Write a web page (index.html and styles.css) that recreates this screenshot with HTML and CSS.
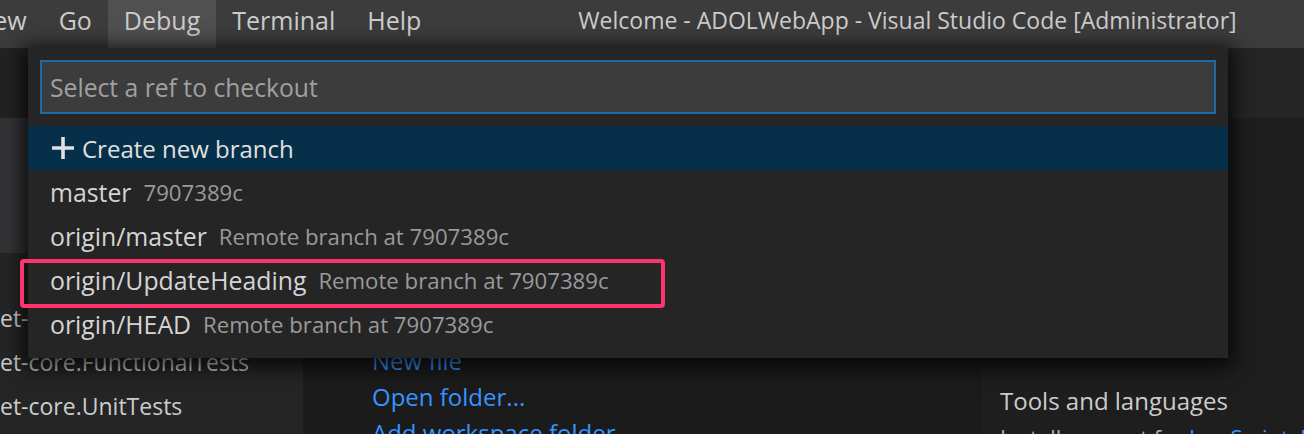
FILE: index.html
```html
<!DOCTYPE html>
<html lang="en">
<head>
<meta charset="utf-8">
<title>Welcome - ADOLWebApp - Visual Studio Code</title>
<link rel="stylesheet" href="styles.css">
</head>
<body>
<div class="app">
  <header class="titlebar">
    <nav class="menubar">
      <span class="menu menu-clipped">View</span>
      <span class="menu">Go</span>
      <span class="menu active">Debug</span>
      <span class="menu">Terminal</span>
      <span class="menu">Help</span>
    </nav>
    <div class="title">Welcome - ADOLWebApp - Visual Studio Code [Administrator]</div>
  </header>

  <div class="workbench">
    <aside class="sidebar">
      <div class="sidebar-head"></div>
      <div class="sidebar-section"></div>
      <ul class="tree">
        <li>et-core.Web</li>
        <li>et-core.FunctionalTests</li>
        <li>et-core.UnitTests</li>
      </ul>
    </aside>
    <main class="editor">
      <div class="tabs"></div>
      <div class="welcome">
        <div class="col-start">
          <a class="link">New file</a>
          <a class="link">Open folder...</a>
          <a class="link">Add workspace folder</a>
        </div>
        <div class="col-customize">
          <h3 class="heading">Tools and languages</h3>
          <p class="detail">Install support for <a class="link-inline">JavaScript, Python, PHP, Azure, Docker</a></p>
        </div>
      </div>
    </main>
  </div>

  <div class="quickpick">
    <div class="qp-input">Select a ref to checkout</div>
    <ul class="qp-list">
      <li class="qp-row selected">
        <svg class="plus" width="26" height="26" viewBox="0 0 26 26"><path d="M13 2v22M2 13h22" stroke="#e0e0e0" stroke-width="3.6" fill="none"/></svg>
        <span class="label">Create new branch</span>
      </li>
      <li class="qp-row"><span class="label">master</span><span class="desc">7907389c</span></li>
      <li class="qp-row"><span class="label">origin/master</span><span class="desc">Remote branch at 7907389c</span></li>
      <li class="qp-row"><span class="label">origin/UpdateHeading</span><span class="desc">Remote branch at 7907389c</span></li>
      <li class="qp-row"><span class="label">origin/HEAD</span><span class="desc">Remote branch at 7907389c</span></li>
    </ul>
  </div>

  <div class="annotation"></div>
</div>
</body>
</html>
```

FILE: styles.css
```css
* { box-sizing: border-box; }

html, body {
  margin: 0;
  padding: 0;
  background: #1e1e1e;
}

body {
  font-family: "Open Sans", "Noto Sans", sans-serif;
  color: #cccccc;
  width: 1304px;
  height: 434px;
  overflow: hidden;
}

.app {
  position: relative;
  width: 1304px;
  height: 434px;
  overflow: hidden;
  display: flex;
  flex-direction: column;
}

/* Title bar */
.titlebar {
  height: 48px;
  flex: none;
  background: #3c3c3c;
  display: flex;
  align-items: stretch;
  font-size: 25px;
  color: #cccccc;
}

.menubar {
  display: flex;
  margin-left: -44px;
}

.menu {
  display: flex;
  align-items: center;
  padding: 0 16px 8px 16px;
  height: 48px;
}

.menu.active {
  background: #505050;
}

.title {
  display: flex;
  align-items: center;
  padding-bottom: 8px;
  margin-left: 141px;
  font-size: 23px;
  white-space: nowrap;
}

/* Workbench */
.workbench {
  flex: 1;
  display: flex;
  min-height: 0;
}

.sidebar {
  width: 303px;
  flex: none;
  background: #252526;
  display: flex;
  flex-direction: column;
  overflow: hidden;
}

.sidebar-head {
  height: 70px;
  flex: none;
  background: #222223;
}

.sidebar-section {
  height: 135px;
  flex: none;
  background: #333336;
}

.tree {
  list-style: none;
  margin: 43px 0 0 0;
  padding: 0;
  font-size: 23px;
}

.tree li {
  height: 44px;
  line-height: 44px;
  white-space: nowrap;
  color: #cccccc;
}

.editor {
  flex: 1;
  background: #1b1b1b;
  display: flex;
  flex-direction: column;
  min-height: 0;
  overflow: hidden;
}

.tabs {
  height: 70px;
  flex: none;
  background: #252526;
}

.welcome {
  flex: 1;
  display: flex;
  min-height: 0;
}

.col-start {
  width: 679px;
  flex: none;
  padding: 225px 0 0 69px;
  display: flex;
  flex-direction: column;
}

.link {
  flex: none;
  font-size: 24px;
  line-height: 36px;
  height: 36px;
  color: #3794ff;
  white-space: nowrap;
}

.col-customize {
  flex: 1;
  background: #1e1e1e;
  padding: 265px 0 0 18px;
}

.heading {
  margin: 0;
  font-weight: normal;
  font-size: 24px;
  line-height: 36px;
  color: #cccccc;
  white-space: nowrap;
}

.detail {
  margin: 0;
  font-size: 22px;
  line-height: 36px;
  color: #b0b0b0;
  white-space: nowrap;
}

.link-inline {
  color: #3794ff;
}

/* Quick pick overlay */
.quickpick {
  position: absolute;
  left: 28px;
  top: 48px;
  width: 1200px;
  height: 310px;
  background: #252526;
  box-shadow: 0 4px 18px 6px rgba(0, 0, 0, 0.72);
  padding: 12px 12px 0 12px;
}

.qp-input {
  height: 54px;
  background: #3c3c3c;
  border: 2px solid #1f6aa5;
  padding: 0 8px;
  display: flex;
  align-items: center;
  font-size: 24.7px;
  color: #a0a0a0;
}

.qp-list {
  list-style: none;
  margin: 12px -12px 0 -12px;
  padding: 0;
}

.qp-row {
  height: 44px;
  display: flex;
  align-items: center;
  padding-left: 22px;
  white-space: nowrap;
}

.qp-row.selected {
  background: #062f4a;
}

.plus {
  margin-right: 6px;
  flex: none;
}

.label {
  font-size: 24.8px;
  color: #d4d4d4;
}

.selected .label {
  font-size: 24px;
  color: #e0e0e0;
}

.desc {
  font-size: 22.2px;
  color: #9a9a9a;
  margin-left: 12px;
}

/* Red annotation frame */
.annotation {
  position: absolute;
  left: 20px;
  top: 259px;
  width: 645px;
  height: 49px;
  border: 4px solid #ff3370;
  border-radius: 4px;
}
```
